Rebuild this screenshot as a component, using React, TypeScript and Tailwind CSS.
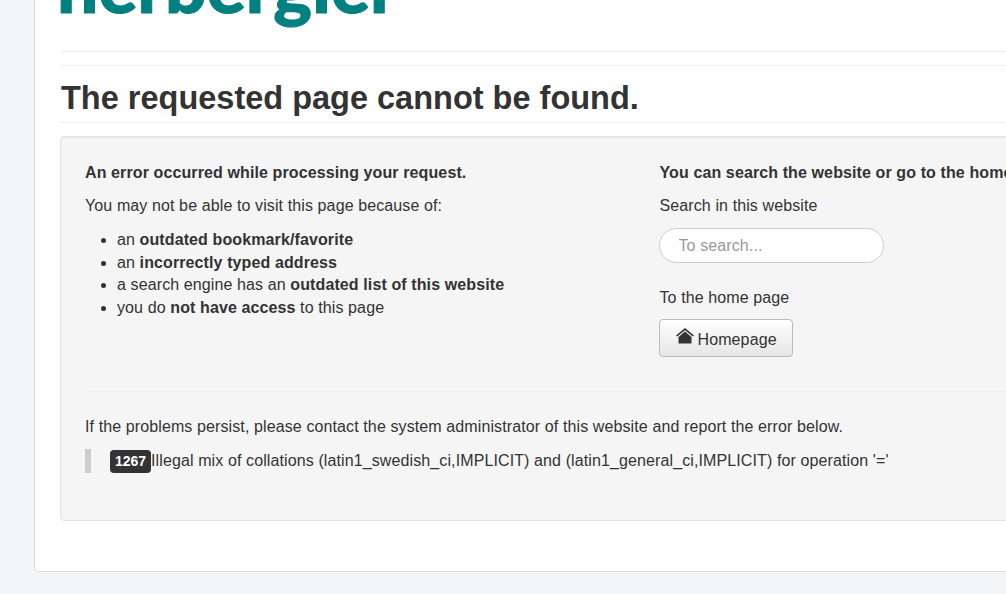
import React from 'react';

const font = { fontFamily: '"Liberation Sans", Arial, sans-serif' };

function HomeIcon() {
  return (
    <svg width="18" height="16" viewBox="0 0 18 16" className="-mt-[5px] shrink-0" fill="#333">
      <path d="M9 0 L18 7.4 L16.8 8.6 L9 2.2 L1.2 8.6 L0 7.4 Z" />
      <path d="M9 3.6 L15.5 9 V15.5 H2.5 V9 Z" />
    </svg>
  );
}

export default function App() {
  return (
    <div className="h-[594px] w-[1006px] overflow-hidden bg-[#f4f5f7] pl-[34px] text-[16px] leading-[22.4px] tracking-[0.11px] text-[#333]" style={font}>
      <div className="h-[572px] w-[1100px] rounded-b-[5px] border-x border-b border-[#dcdcdc] bg-white pl-[25px]">
        <div className="h-[52px] w-full overflow-hidden border-b border-[#eee]">
          <div className="-mt-[51px] -ml-[3px] text-[73px] leading-[72px] font-black tracking-normal text-[#008080] [-webkit-text-stroke:1px_#008080]" style={{ fontFamily: 'Lato, sans-serif' }}>
            herbergier
          </div>
        </div>
        <div className="mt-[13px] border-t border-[#eee]">
          <h1 className="mt-[11px] pb-[2px] pl-px text-[32.5px] leading-[43px] font-bold tracking-normal">The requested page cannot be found.</h1>
        </div>
        <div className="border-t border-[#eee] pt-[13px]">
          <div className="h-[385px] rounded-[4px] border border-[#e3e3e3] bg-[#f5f5f5] px-6 pt-[25px] shadow-[inset_0_1px_1px_rgba(0,0,0,0.05)]">
            <div className="flex h-[230px] border-b border-[#eee]">
              <div className="w-[574.5px]">
                <p className="font-bold">An error occurred while processing your request.</p>
                <p className="mt-[11px]">You may not be able to visit this page because of:</p>
                <ul className="mt-[11.5px] list-disc pl-[32px]">
                  <li>an <b>outdated bookmark/favorite</b></li>
                  <li>an <b>incorrectly typed address</b></li>
                  <li>a search engine has an <b>outdated list of this website</b></li>
                  <li>you do <b>not have access</b> to this page</li>
                </ul>
              </div>
              <div>
                <p className="font-bold whitespace-nowrap">You can search the website or go to the home page.</p>
                <p className="mt-[11px]">Search in this website</p>
                <input
                  placeholder="To search..."
                  className="mt-[10px] -ml-px block h-[35px] w-[225px] rounded-[18px] border border-[#ccc] bg-white px-[19px] pt-[2px] text-[16px] tracking-[0.11px] placeholder:text-[#999]"
                />
                <p className="mt-[24px]">To the home page</p>
                <button className="mt-[10px] -ml-px flex h-[38px] w-[134px] items-center gap-[4px] rounded-[4px] border border-[#bbb] bg-gradient-to-b from-white to-[#e6e6e6] pl-4 text-[16px] tracking-[0.11px] text-[#333]">
                  <HomeIcon />
                  <span className="mt-[3px]">Homepage</span>
                </button>
              </div>
            </div>
            <p className="mt-[24px]">If the problems persist, please contact the system administrator of this website and report the error below.</p>
            <div className="mt-[11px] flex h-6 items-center border-l-[6px] border-[#ccc] pl-[19px]">
              <span className="flex h-[23px] w-[41px] shrink-0 items-center justify-center rounded-[4px] bg-[#333] text-[14px] font-bold tracking-normal text-white">1267</span>
              <span>Illegal mix of collations (latin1_swedish_ci,IMPLICIT) and (latin1_general_ci,IMPLICIT) for operation '='</span>
            </div>
          </div>
        </div>
      </div>
    </div>
  );
}
